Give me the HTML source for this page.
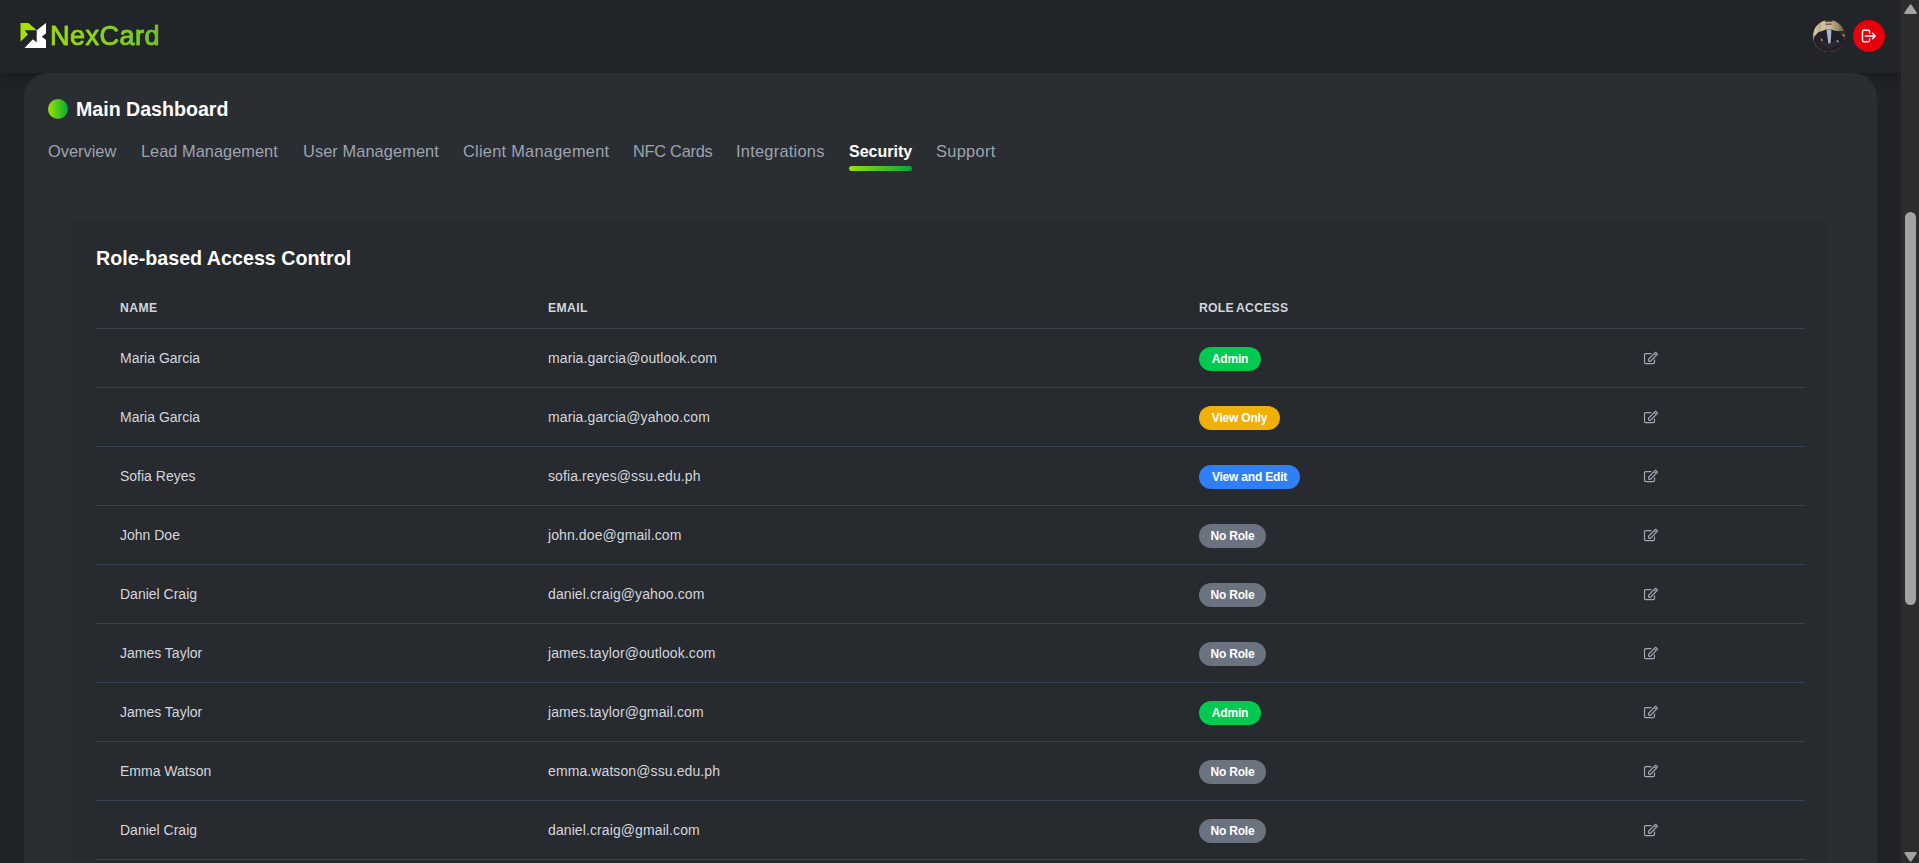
<!DOCTYPE html>
<html>
<head>
<meta charset="utf-8">
<style>
*{box-sizing:border-box;margin:0;padding:0}
html,body{width:1919px;height:863px;overflow:hidden}
body{background:#1f2226;font-family:"Liberation Sans",sans-serif;position:relative}
.abs{position:absolute}
#header{position:absolute;left:0;top:0;width:1901px;height:73px;background:#212428;box-shadow:0 2px 14px rgba(0,0,0,.25)}
#panel{position:absolute;left:24px;top:73px;width:1853px;height:900px;background:#2a2d32;border-radius:24px 24px 0 0}
#sb{position:absolute;left:1901px;top:0;width:18px;height:863px;background:#2c2c2c;border-left:1px solid #2e2e2e}
#thumb{position:absolute;left:3px;top:212px;width:11px;height:393px;background:#a3a3a3;border-radius:6px}
.dot{position:absolute;left:48px;top:99px;width:20px;height:20px;border-radius:50%;background:linear-gradient(90deg,#9ae400,#00ad36)}
.mtitle{position:absolute;left:76px;top:96px;font-size:19.6px;font-weight:bold;color:#fff;line-height:26px;white-space:nowrap}
.tab{position:absolute;top:141px;font-size:16.4px;color:#9ca4b0;line-height:20px;white-space:nowrap}
.tab.active{color:#fff;font-weight:bold;font-size:16px;top:142px}
.uline{position:absolute;left:849px;top:166px;width:63px;height:5px;border-radius:3px;background:linear-gradient(90deg,#96e200,#00a83c)}
#card{position:absolute;left:72px;top:220px;width:1757px;height:700px;background:#272a2f;border-radius:10px}
.ctitle{position:absolute;left:96px;top:246px;font-size:19.7px;font-weight:bold;color:#fff;line-height:24px;white-space:nowrap}
.th{position:absolute;top:301px;font-size:12.2px;font-weight:bold;color:#d2d6dc;letter-spacing:.4px;line-height:15px;white-space:nowrap}
.hline{position:absolute;left:96px;width:1709px;height:1px;background:#364354}
.cell{position:absolute;font-size:14px;color:#d4d7dd;line-height:18px;white-space:nowrap}
.badge{position:absolute;left:1199px;height:24px;border-radius:12px;font-size:12px;font-weight:bold;color:#fff;line-height:24px;padding:0;text-align:center;white-space:nowrap;letter-spacing:-.2px}
.g{background:#02c94f;width:62px}.y{background:#f0b00a;width:81px}.b{background:#2f80f7;width:101px}.n{background:#6b7280;width:67px}
.edit{position:absolute;left:1643px;width:16px;height:15px}
</style>
</head>
<body>
<div id="header">
  <svg class="abs" style="left:20px;top:23px" width="27" height="26" viewBox="0 0 27 26">
    <polygon points="0.5,0 8.4,0 16.7,7.3 4.5,7.3 8,11.6 0.5,18.5" fill="#a8e000"/>
    <polygon points="26,0 26,10.2 21.8,13.7 26,17.1 26,25 4.5,25 12.9,16.3 16.7,19.6 16.7,7.3" fill="#ffffff"/>
  </svg>
  <div class="abs" style="left:50px;top:20px;font-size:27px;line-height:32px;white-space:nowrap;letter-spacing:.5px;background:linear-gradient(90deg,#a6e000 0%,#8fd41a 45%,#66bb3a 100%);-webkit-background-clip:text;background-clip:text;color:transparent;-webkit-text-stroke:.6px #8ad02a">NexCard</div>
  <svg class="abs" style="left:1813px;top:19.5px" width="32" height="32" viewBox="0 0 32 32">
    <defs><clipPath id="avc"><circle cx="16" cy="16" r="16"/></clipPath>
    <linearGradient id="avbg" x1="0" y1="0" x2="1" y2="0"><stop offset="0" stop-color="#bfae86"/><stop offset=".3" stop-color="#d2c39c"/><stop offset=".65" stop-color="#b8a67c"/><stop offset="1" stop-color="#5e5038"/></linearGradient></defs>
    <g clip-path="url(#avc)">
      <rect width="32" height="32" fill="url(#avbg)"/>
      <rect x="2" y="4" width="1.6" height="24" fill="#e8dfc6" opacity=".6"/>
      <rect x="6" y="3" width="1.5" height="26" fill="#a39168" opacity=".5"/>
      <rect x="21" y="11" width="11" height="12" fill="#2e2a24"/>
      <rect x="22" y="14.5" width="10" height="2" fill="#9c8a66"/>
      <circle cx="25" cy="7.5" r="1" fill="#8fa6d8"/>
      <ellipse cx="15.6" cy="5.2" rx="3.2" ry="4.4" fill="#cdb2a0"/>
      <path d="M12 0h7.5v1.8h-7.5z" fill="#2a2420"/>
      <path d="M12.6 3.6h6v1.2h-6z" fill="#3b3634" opacity=".8"/>
      <path d="M1 17 L5 12.5 L13 9.5 L18.5 9.5 L26 12 L30 16 L32 24 L32 32 L0 32 Z" fill="#221f28"/>
      <path d="M13.5 9.5 L18.5 9.5 L17.3 27 L15.8 27 Z" fill="#a3b6d2"/>
      <path d="M6 19 L15 24 L25 19.5 L28 23 L17 29 L8 24.5 Z" fill="#2c2834"/>
      <path d="M7.5 18l2.6 2.2-1.4.8z M23.5 20l2.4 1-1.4 1.6z" fill="#d8c0b0"/>
    </g>
  </svg>
  <svg class="abs" style="left:1853px;top:20px" width="32" height="32" viewBox="0 0 32 32">
    <circle cx="16" cy="16" r="16" fill="#e6000b"/>
    <path d="M16.6 13V11.8a1.6 1.6 0 0 0-1.6-1.6h-3.9a1.6 1.6 0 0 0-1.6 1.6v8.4a1.6 1.6 0 0 0 1.6 1.6h3.9a1.6 1.6 0 0 0 1.6-1.6v-1.2" fill="none" stroke="#fff" stroke-width="1.4" stroke-linecap="round"/>
    <path d="M12.3 16h9.6M19.5 13.3l2.7 2.7-2.7 2.7" fill="none" stroke="#fff" stroke-width="1.4" stroke-linecap="round" stroke-linejoin="round"/>
  </svg>
</div>
<div id="panel"></div>
<div class="dot"></div>
<div class="mtitle">Main Dashboard</div>
<div class="tab" style="left:48px">Overview</div>
<div class="tab" style="left:141px">Lead Management</div>
<div class="tab" style="left:303px;letter-spacing:.07px">User Management</div>
<div class="tab" style="left:463px;letter-spacing:.25px">Client Management</div>
<div class="tab" style="left:633px;letter-spacing:-.28px">NFC Cards</div>
<div class="tab" style="left:736px;letter-spacing:.25px">Integrations</div>
<div class="tab active" style="left:849px">Security</div>
<div class="tab" style="left:936px;letter-spacing:.3px">Support</div>
<div class="uline"></div>
<div id="card"></div>
<div class="ctitle">Role-based Access Control</div>
<div class="th" style="left:120px">NAME</div>
<div class="th" style="left:548px">EMAIL</div>
<div class="th" style="left:1199px;letter-spacing:.25px;word-spacing:-1px">ROLE ACCESS</div>
<div class="hline" style="top:328px"></div>
<div id="rows">
<div class="cell" style="left:120px;top:349px">Maria Garcia</div>
<div class="cell" style="left:548px;top:349px;letter-spacing:.1px">maria.garcia@outlook.com</div>
<div class="badge g" style="top:347px">Admin</div>
<svg class="edit" style="top:351px" viewBox="0 0 16 15"><path d="M8.4 2.6H2.8a1.3 1.3 0 0 0-1.3 1.3v7.4a1.3 1.3 0 0 0 1.3 1.3h7.4a1.3 1.3 0 0 0 1.3-1.3V8.6" fill="none" stroke="#a3a9b7" stroke-width="1.15"/><path d="M5.81 8.01L12.61 1.21L14.59 3.19L7.79 9.99A1.4 1.4 0 0 1 5.81 8.01Z M11.27 2.55L13.25 4.53" fill="none" stroke="#a3a9b7" stroke-width="1.1" stroke-linejoin="round"/></svg>
<div class="hline" style="top:387px"></div>
<div class="cell" style="left:120px;top:408px">Maria Garcia</div>
<div class="cell" style="left:548px;top:408px;letter-spacing:.1px">maria.garcia@yahoo.com</div>
<div class="badge y" style="top:406px">View Only</div>
<svg class="edit" style="top:410px" viewBox="0 0 16 15"><path d="M8.4 2.6H2.8a1.3 1.3 0 0 0-1.3 1.3v7.4a1.3 1.3 0 0 0 1.3 1.3h7.4a1.3 1.3 0 0 0 1.3-1.3V8.6" fill="none" stroke="#a3a9b7" stroke-width="1.15"/><path d="M5.81 8.01L12.61 1.21L14.59 3.19L7.79 9.99A1.4 1.4 0 0 1 5.81 8.01Z M11.27 2.55L13.25 4.53" fill="none" stroke="#a3a9b7" stroke-width="1.1" stroke-linejoin="round"/></svg>
<div class="hline" style="top:446px"></div>
<div class="cell" style="left:120px;top:467px">Sofia Reyes</div>
<div class="cell" style="left:548px;top:467px;letter-spacing:.1px">sofia.reyes@ssu.edu.ph</div>
<div class="badge b" style="top:465px">View and Edit</div>
<svg class="edit" style="top:469px" viewBox="0 0 16 15"><path d="M8.4 2.6H2.8a1.3 1.3 0 0 0-1.3 1.3v7.4a1.3 1.3 0 0 0 1.3 1.3h7.4a1.3 1.3 0 0 0 1.3-1.3V8.6" fill="none" stroke="#a3a9b7" stroke-width="1.15"/><path d="M5.81 8.01L12.61 1.21L14.59 3.19L7.79 9.99A1.4 1.4 0 0 1 5.81 8.01Z M11.27 2.55L13.25 4.53" fill="none" stroke="#a3a9b7" stroke-width="1.1" stroke-linejoin="round"/></svg>
<div class="hline" style="top:505px"></div>
<div class="cell" style="left:120px;top:526px">John Doe</div>
<div class="cell" style="left:548px;top:526px;letter-spacing:.1px">john.doe@gmail.com</div>
<div class="badge n" style="top:524px">No Role</div>
<svg class="edit" style="top:528px" viewBox="0 0 16 15"><path d="M8.4 2.6H2.8a1.3 1.3 0 0 0-1.3 1.3v7.4a1.3 1.3 0 0 0 1.3 1.3h7.4a1.3 1.3 0 0 0 1.3-1.3V8.6" fill="none" stroke="#a3a9b7" stroke-width="1.15"/><path d="M5.81 8.01L12.61 1.21L14.59 3.19L7.79 9.99A1.4 1.4 0 0 1 5.81 8.01Z M11.27 2.55L13.25 4.53" fill="none" stroke="#a3a9b7" stroke-width="1.1" stroke-linejoin="round"/></svg>
<div class="hline" style="top:564px"></div>
<div class="cell" style="left:120px;top:585px">Daniel Craig</div>
<div class="cell" style="left:548px;top:585px;letter-spacing:.1px">daniel.craig@yahoo.com</div>
<div class="badge n" style="top:583px">No Role</div>
<svg class="edit" style="top:587px" viewBox="0 0 16 15"><path d="M8.4 2.6H2.8a1.3 1.3 0 0 0-1.3 1.3v7.4a1.3 1.3 0 0 0 1.3 1.3h7.4a1.3 1.3 0 0 0 1.3-1.3V8.6" fill="none" stroke="#a3a9b7" stroke-width="1.15"/><path d="M5.81 8.01L12.61 1.21L14.59 3.19L7.79 9.99A1.4 1.4 0 0 1 5.81 8.01Z M11.27 2.55L13.25 4.53" fill="none" stroke="#a3a9b7" stroke-width="1.1" stroke-linejoin="round"/></svg>
<div class="hline" style="top:623px"></div>
<div class="cell" style="left:120px;top:644px">James Taylor</div>
<div class="cell" style="left:548px;top:644px;letter-spacing:.1px">james.taylor@outlook.com</div>
<div class="badge n" style="top:642px">No Role</div>
<svg class="edit" style="top:646px" viewBox="0 0 16 15"><path d="M8.4 2.6H2.8a1.3 1.3 0 0 0-1.3 1.3v7.4a1.3 1.3 0 0 0 1.3 1.3h7.4a1.3 1.3 0 0 0 1.3-1.3V8.6" fill="none" stroke="#a3a9b7" stroke-width="1.15"/><path d="M5.81 8.01L12.61 1.21L14.59 3.19L7.79 9.99A1.4 1.4 0 0 1 5.81 8.01Z M11.27 2.55L13.25 4.53" fill="none" stroke="#a3a9b7" stroke-width="1.1" stroke-linejoin="round"/></svg>
<div class="hline" style="top:682px"></div>
<div class="cell" style="left:120px;top:703px">James Taylor</div>
<div class="cell" style="left:548px;top:703px;letter-spacing:.1px">james.taylor@gmail.com</div>
<div class="badge g" style="top:701px">Admin</div>
<svg class="edit" style="top:705px" viewBox="0 0 16 15"><path d="M8.4 2.6H2.8a1.3 1.3 0 0 0-1.3 1.3v7.4a1.3 1.3 0 0 0 1.3 1.3h7.4a1.3 1.3 0 0 0 1.3-1.3V8.6" fill="none" stroke="#a3a9b7" stroke-width="1.15"/><path d="M5.81 8.01L12.61 1.21L14.59 3.19L7.79 9.99A1.4 1.4 0 0 1 5.81 8.01Z M11.27 2.55L13.25 4.53" fill="none" stroke="#a3a9b7" stroke-width="1.1" stroke-linejoin="round"/></svg>
<div class="hline" style="top:741px"></div>
<div class="cell" style="left:120px;top:762px">Emma Watson</div>
<div class="cell" style="left:548px;top:762px;letter-spacing:.1px">emma.watson@ssu.edu.ph</div>
<div class="badge n" style="top:760px">No Role</div>
<svg class="edit" style="top:764px" viewBox="0 0 16 15"><path d="M8.4 2.6H2.8a1.3 1.3 0 0 0-1.3 1.3v7.4a1.3 1.3 0 0 0 1.3 1.3h7.4a1.3 1.3 0 0 0 1.3-1.3V8.6" fill="none" stroke="#a3a9b7" stroke-width="1.15"/><path d="M5.81 8.01L12.61 1.21L14.59 3.19L7.79 9.99A1.4 1.4 0 0 1 5.81 8.01Z M11.27 2.55L13.25 4.53" fill="none" stroke="#a3a9b7" stroke-width="1.1" stroke-linejoin="round"/></svg>
<div class="hline" style="top:800px"></div>
<div class="cell" style="left:120px;top:821px">Daniel Craig</div>
<div class="cell" style="left:548px;top:821px;letter-spacing:.1px">daniel.craig@gmail.com</div>
<div class="badge n" style="top:819px">No Role</div>
<svg class="edit" style="top:823px" viewBox="0 0 16 15"><path d="M8.4 2.6H2.8a1.3 1.3 0 0 0-1.3 1.3v7.4a1.3 1.3 0 0 0 1.3 1.3h7.4a1.3 1.3 0 0 0 1.3-1.3V8.6" fill="none" stroke="#a3a9b7" stroke-width="1.15"/><path d="M5.81 8.01L12.61 1.21L14.59 3.19L7.79 9.99A1.4 1.4 0 0 1 5.81 8.01Z M11.27 2.55L13.25 4.53" fill="none" stroke="#a3a9b7" stroke-width="1.1" stroke-linejoin="round"/></svg>
<div class="hline" style="top:859px"></div>
</div><!--rows-->
<div id="sb"><div id="thumb"></div>
  <svg class="abs" style="left:0;top:0" width="18" height="16" viewBox="0 0 18 16"><path d="M8.6 5.4 L13.8 12.9 H3.4 Z" fill="#a3a3a3" stroke="#a3a3a3" stroke-width="2" stroke-linejoin="round"/></svg>
  <svg class="abs" style="left:0;top:847px" width="18" height="16" viewBox="0 0 18 16"><path d="M3.4 6 H13.8 L8.6 13.6 Z" fill="#a3a3a3" stroke="#a3a3a3" stroke-width="2" stroke-linejoin="round"/></svg>
</div>
</body>
</html>
